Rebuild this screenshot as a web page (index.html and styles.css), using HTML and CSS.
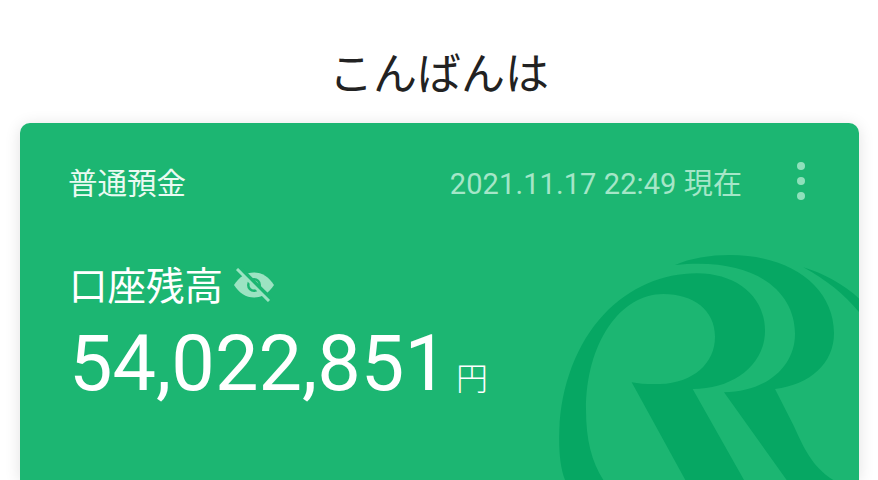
FILE: index.html
```html
<!DOCTYPE html>
<html lang="ja">
<head>
  <meta charset="UTF-8" />
  <title>口座残高</title>
  <link rel="stylesheet" href="styles.css">
</head>
<body>
  <h1 class="greeting">こんばんは</h1>
  <div class="card">
    <svg class="watermark" viewBox="0 0 1014 720" aria-hidden="true">
      <path d="M75 720C60 680 56 630 58 570C62 440 110 310 190 225C270 140 370 100 470 100C590 100 675 170 675 272C675 375 580 447 458 447L612 720H436L275 427C300 432 330 433 360 432C460 428 525 370 525 290C525 210 460 162 370 162C240 162 138 310 138 510C138 600 155 665 190 720Z" />
      <path d="M405 75C450 55 510 45 570 45C750 45 882 140 882 280C882 370 810 435 705 447L760 555C790 620 815 680 880 720H740L552 457C680 455 765 380 765 282C765 150 640 50 405 75Z" />
      <path d="M790 82C850 100 915 135 960 178V220C915 165 860 120 790 82Z" />
    </svg>
    <div class="card-top">
      <span class="account">普通預金</span>
      <div class="card-status">
        <span class="timestamp">2021.11.17 22:49 現在</span>
        <div class="menu-dots"><i></i><i></i><i></i></div>
      </div>
    </div>
    <div class="balance-label">
      <span>口座残高</span>
      <svg class="eye" viewBox="0 0 40 34" aria-hidden="true">
        <path d="M0 17C5 9 12 4.500 20 4.500C28 4.500 35 9 40 17C35 25 28 29.500 20 29.500C12 29.500 5 25 0 17Z" fill="#9ce3c2" />
        <circle cx="20" cy="17" r="7" fill="#1cb672" />
        <circle cx="20" cy="17" r="4.500" fill="#9ce3c2" />
        <path d="M6 0L38 32" stroke="#1cb672" stroke-width="4" />
        <path d="M3 1L35 33" stroke="#9ce3c2" stroke-width="3" />
      </svg>
    </div>
    <div class="balance">
      <span class="amount">54,022,851</span>
      <span class="unit">円</span>
    </div>
  </div>
</body>
</html>
```

FILE: styles.css
```css
html, body {
  height: 100%;
  overflow: hidden;
}
body {
  margin: 0;
  background-color: #fff;
  font-family: Roboto, 'Noto Sans CJK JP', sans-serif;
}
.greeting {
  margin: 0;
  height: 123px;
  padding-top: 44px;
  box-sizing: border-box;
  text-align: center;
  font-family: 'Noto Sans CJK JP', sans-serif;
  font-size: 44px;
  line-height: 54px;
  font-weight: 400;
  color: #222;
}
.card {
  position: relative;
  margin: 0 19px 0 20px;
  height: 357px;
  padding: 36px 58px 0 48px;
  box-sizing: border-box;
  overflow: hidden;
  background-color: #1cb672;
  border-radius: 10px 10px 0 0;
  box-shadow: 0 2px 16px rgba(0, 0, 0, 0.12);
  color: #fff;
}
.watermark {
  position: absolute;
  left: 520px;
  top: 117px;
  width: 338px;
  height: 240px;
  fill: #06a763;
}
.card-top {
  position: relative;
  display: flex;
  justify-content: space-between;
  align-items: center;
  height: 44px;
}
.account {
  font-family: 'Noto Sans CJK JP', sans-serif;
  font-size: 29.5px;
  color: #eafaf2;
}
.card-status {
  display: flex;
  align-items: center;
  gap: 55px;
}
.timestamp {
  font-size: 29px;
  color: #a5e6c8;
  letter-spacing: 0.1px;
}
.menu-dots {
  display: flex;
  flex-direction: column;
  gap: 7px;
  margin-right: -4px;
}
.menu-dots i {
  display: block;
  width: 8px;
  height: 8px;
  border-radius: 50%;
  background-color: #8fe0bb;
}
.balance-label {
  position: relative;
  display: flex;
  align-items: center;
  gap: 10px;
  margin-top: 56px;
  padding-left: 1px;
  height: 48px;
  font-family: 'Noto Sans CJK JP', sans-serif;
  font-size: 38.5px;
}
.eye {
  width: 40px;
  height: 34px;
  margin-top: 4px;
  margin-left: 1px;
}
.balance {
  position: relative;
  display: flex;
  align-items: baseline;
  gap: 8px;
  padding-left: 1px;
  margin-top: 9px;
}
.amount {
  font-size: 77.5px;
  line-height: 96px;
}
.unit {
  font-family: 'Noto Sans CJK JP', sans-serif;
  font-size: 32px;
  font-weight: 300;
}
```
